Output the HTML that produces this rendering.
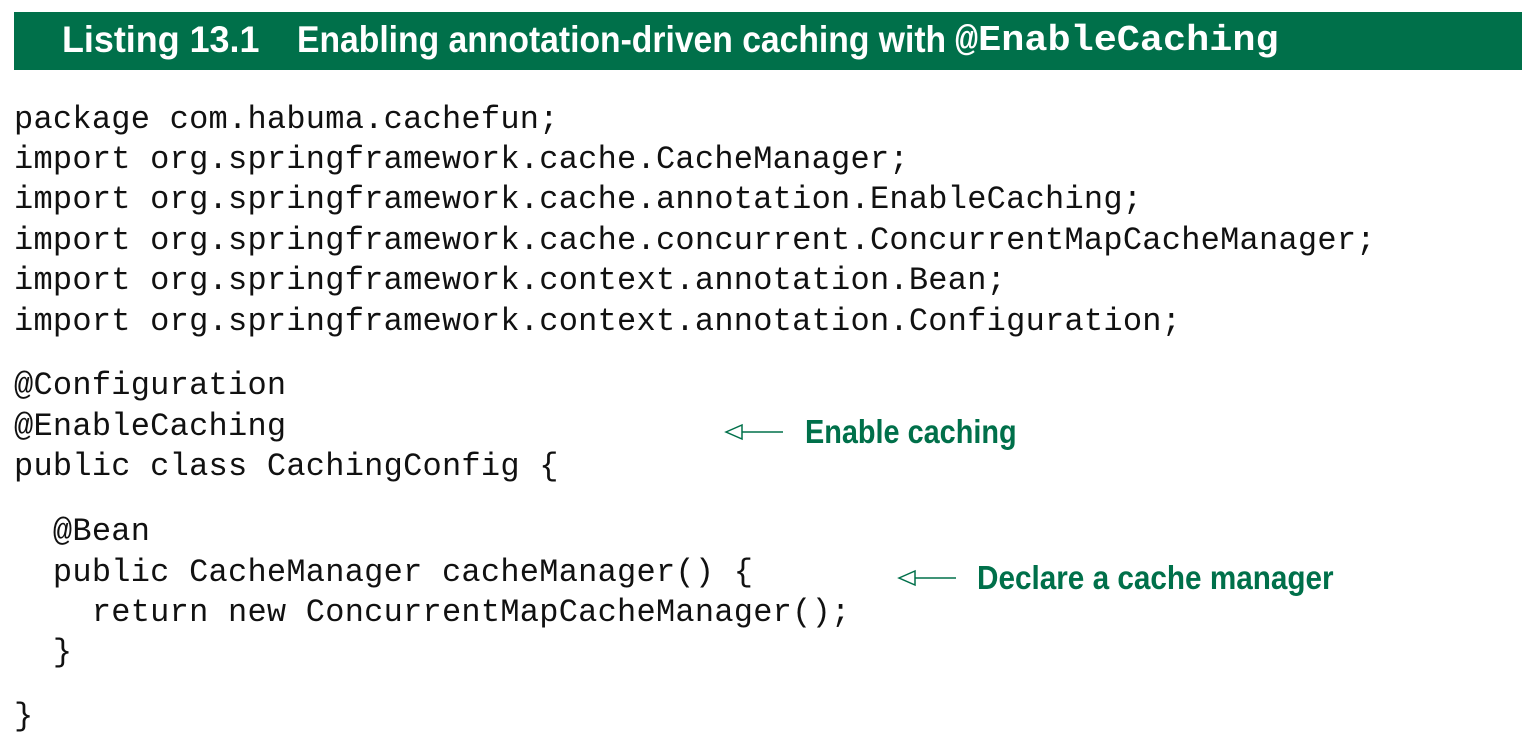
<!DOCTYPE html>
<html><head><meta charset="utf-8"><style>
body{margin:0;width:1534px;height:743px;background:#fff;position:relative;overflow:hidden}
.bar{position:absolute;left:14px;top:12px;width:1508px;height:58px;background:#00704a}
.h{position:absolute;color:#fff;font-family:"Liberation Sans",sans-serif;font-weight:bold;font-size:37px;top:19px;line-height:42px;transform-origin:0 0;white-space:nowrap}
.c{position:absolute;left:14px;font-family:"Liberation Mono",monospace;font-size:32px;letter-spacing:0.25px;line-height:40px;white-space:pre;color:#111}
.a{position:absolute;color:#00704a;font-family:"Liberation Sans",sans-serif;font-weight:bold;font-size:33px;line-height:36px;transform-origin:0 0;white-space:nowrap}
svg{position:absolute}
</style></head><body>
<div class="bar"></div>
<div class="h" style="left:62px;transform:scaleX(0.97)">Listing 13.1</div>
<div class="h" style="left:297px;transform:scaleX(0.91)">Enabling annotation-driven caching with</div>
<div class="h" style="left:955px;top:20px;font-family:'Liberation Mono',monospace;font-size:36px;transform:scaleX(1.07)">@EnableCaching</div>
<div class="c" style="top:100px">package com.habuma.cachefun;</div>
<div class="c" style="top:140px">import org.springframework.cache.CacheManager;</div>
<div class="c" style="top:180px">import org.springframework.cache.annotation.EnableCaching;</div>
<div class="c" style="top:221px">import org.springframework.cache.concurrent.ConcurrentMapCacheManager;</div>
<div class="c" style="top:261px">import org.springframework.context.annotation.Bean;</div>
<div class="c" style="top:302px">import org.springframework.context.annotation.Configuration;</div>
<div class="c" style="top:366px">@Configuration</div>
<div class="c" style="top:407px">@EnableCaching</div>
<div class="c" style="top:447px">public class CachingConfig {</div>
<div class="c" style="top:512px">  @Bean</div>
<div class="c" style="top:553px">  public CacheManager cacheManager() {</div>
<div class="c" style="top:593px">    return new ConcurrentMapCacheManager();</div>
<div class="c" style="top:633px">  }</div>
<div class="c" style="top:697px">}</div>
<svg width="1534" height="743" style="left:0;top:0">
<g stroke="#00704a" stroke-width="1.5" fill="none">
<path d="M726 432 L742 425 L742 439 Z M742 432 L783 432"/>
<path d="M899 578 L915 571 L915 585 Z M915 578 L956 578"/>
</g></svg>
<div class="a" style="left:805px;top:414px;transform:scaleX(0.874)">Enable caching</div>
<div class="a" style="left:977px;top:560px;transform:scaleX(0.9)">Declare a cache manager</div>
</body></html>
